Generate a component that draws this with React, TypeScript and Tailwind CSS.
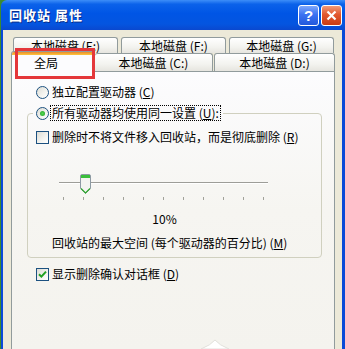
import React from "react";

const font = { fontFamily: '"Noto Sans CJK SC", "Noto Sans", sans-serif' };

const Radio = ({ checked }: { checked?: boolean }) => (
  <span className="relative flex h-[13px] w-[13px] shrink-0 items-center justify-center rounded-full border border-[#1c5180] bg-[linear-gradient(135deg,#dcdcd5_0%,#f4f4f0_60%,#ffffff_100%)]">
    {checked && (
      <span className="h-[5px] w-[5px] rounded-full bg-[radial-gradient(circle,#55d655_0%,#21a121_100%)]" />
    )}
  </span>
);

const Check = ({ checked }: { checked?: boolean }) => (
  <span className="flex h-[13px] w-[13px] shrink-0 items-center justify-center border border-[#1c5180] bg-[linear-gradient(135deg,#dcdcd5_0%,#f4f4f0_60%,#ffffff_100%)]">
    {checked && (
      <svg width="9" height="9" viewBox="0 0 9 9">
        <path d="M1 4.2 L3.4 6.6 L8 1.6" fill="none" stroke="#21a121" strokeWidth="2" />
      </svg>
    )}
  </span>
);

const Ul = ({ c }: { c: string }) => <span className="underline underline-offset-1">{c}</span>;

const Tab = ({ label, w }: { label: React.ReactNode; w: string }) => (
  <div
    className={`${w} flex h-[16px] items-center justify-center rounded-t-[3px] border border-b-0 border-[#919b9c] bg-[linear-gradient(180deg,#ffffff_0%,#f3f3ef_60%,#e6e5df_100%)] text-[12px] leading-[14px] text-black`}
  >
    {label}
  </div>
);

function Slider() {
  const ticks = Array.from({ length: 11 }, (_, i) => 6 + i * 20);
  return (
    <svg width="214" height="30" viewBox="0 0 214 30">
      <line x1="2" y1="10.5" x2="211" y2="10.5" stroke="#9d9d98" />
      <line x1="2" y1="11.5" x2="211" y2="11.5" stroke="#ffffff" />
      {ticks.map((x) => (
        <line key={x} x1={x + 0.5} y1="25" x2={x + 0.5} y2="28" stroke="#a1a19a" />
      ))}
      <path
        d="M23.5 4 Q23.5 2.5 25 2.5 H32 Q33.5 2.5 33.5 4 V16.5 L28.5 21.5 L23.5 16.5 Z"
        fill="#f4f4f0"
        stroke="#8d9aa3"
      />
      <rect x="24" y="3" width="9" height="3" fill="#3cbf3c" />
      <path d="M24 16.5 L28.5 21 L33 16.5" fill="none" stroke="#2ea52e" strokeWidth="1.2" />
    </svg>
  );
}

export default function App() {
  return (
    <div className="relative h-[349px] w-[345px] overflow-hidden bg-[#3c8a30]" style={font}>
      <div className="ml-[1px] flex h-full flex-col">
        <div className="flex h-[30px] items-center rounded-tl-[6px] bg-[linear-gradient(180deg,#3d8ef8_0%,#0b62ea_14%,#0055e5_45%,#0455e0_80%,#0a48cf_100%)] pl-[8px] pr-[3px]">
          <span className="flex-1 text-[13px] font-bold leading-[16px] tracking-[1px] text-white [text-shadow:1px_1px_0_#0a2f8a]">
            回收站 属性
          </span>
          <div className="flex gap-[2px]">
            <div className="flex h-[21px] w-[21px] items-center justify-center rounded-[3px] border border-white bg-[linear-gradient(180deg,#7ea8fb_0%,#3b72f2_45%,#2259dc_100%)] text-[15px] font-bold leading-none text-white" style={{ fontFamily: '"Liberation Sans", sans-serif' }}>
              ?
            </div>
            <div className="flex h-[21px] w-[21px] items-center justify-center rounded-[3px] border border-white bg-[linear-gradient(180deg,#f09a78_0%,#e2582f_45%,#c93b12_100%)]">
              <svg width="11" height="11" viewBox="0 0 11 11">
                <path d="M1.5 1.5 L9.5 9.5 M9.5 1.5 L1.5 9.5" stroke="#ffffff" strokeWidth="2.2" />
              </svg>
            </div>
          </div>
        </div>

        <div className="flex flex-1 flex-col overflow-hidden border-l-[2px] border-r-[3px] border-[#0a4ad8] bg-[#ece9d8] pl-[8px] pr-[7px] pt-[7px]">
          <div className="ml-[2px] flex gap-[3px]">
            <Tab w="w-[105px]" label={<span>本地磁盘 (E:)</span>} />
            <Tab w="w-[105px]" label={<span>本地磁盘 (F:)</span>} />
            <Tab w="w-[105px]" label={<span>本地磁盘 (G:)</span>} />
          </div>
          <div className="relative z-10 flex h-[18px] items-end">
            <div className="-mb-[1px] flex h-[21px] w-[84px] flex-col rounded-t-[3px] border border-b-0 border-[#919b9c] bg-[#fcfcfe]">
              <div className="h-[3px] rounded-t-[2px] bg-[linear-gradient(180deg,#e68b2c_0%,#ffc73c_100%)]" />
              <div className="flex flex-1 items-center justify-center pb-[2px] pr-[14px] text-[12px] leading-[14px] text-black">
                全局
              </div>
            </div>
            <div className="flex h-[18px] w-[118px] items-center justify-center rounded-t-[3px] border border-b-0 border-l-0 border-[#919b9c] bg-[linear-gradient(180deg,#ffffff_0%,#f3f3ef_60%,#e6e5df_100%)] text-[12px] leading-[14px]">
              本地磁盘 (C:)
            </div>
            <div className="ml-[1px] flex h-[18px] w-[121px] items-center justify-center rounded-t-[3px] border border-b-0 border-[#919b9c] bg-[linear-gradient(180deg,#ffffff_0%,#f3f3ef_60%,#e6e5df_100%)] text-[12px] leading-[14px]">
              本地磁盘 (D:)
            </div>
          </div>

          <div className="flex-1 border border-b-0 border-[#919b9c] bg-[linear-gradient(180deg,#fcfcfe_0%,#f6f5f1_50%,#f4f3ee_100%)] text-[12px] leading-[14px] text-black">
            <div className="ml-[24px] mt-[13px] flex h-[14px] items-center gap-[3px]">
              <Radio />
              <span>
                独立配置驱动器 (<Ul c="C" />)
              </span>
            </div>

            <fieldset className="ml-[15px] mt-[6px] w-[295px] rounded-[4px] border border-[#d0d0bf] pb-[7px] pl-[5px]">
              <legend className="flex h-[16px] items-center pl-[3px] pr-[2px]">
                <Radio checked />
                <span className="ml-[1px] border border-dotted border-black px-[1px] leading-[14px]">
                  所有驱动器均使用同一设置 (<Ul c="U" />):
                </span>
              </legend>
              <div className="ml-[3px] mt-[9px] flex h-[14px] items-center gap-[3px]">
                <Check />
                <span>
                  删除时不将文件移入回收站，而是彻底删除 (<Ul c="R" />)
                </span>
              </div>
              <div className="ml-[24px] mt-[28px] flex w-[214px] flex-col">
                <Slider />
                <div className="mt-[10px] h-[14px] pl-[1px] text-center">10%</div>
              </div>
              <div className="ml-[19px] mt-[10px] h-[14px]">
                回收站的最大空间 (每个驱动器的百分比) (<Ul c="M" />)
              </div>
            </fieldset>

            <div className="ml-[24px] mt-[9px] flex h-[14px] items-center gap-[3px]">
              <Check checked />
              <span>
                显示删除确认对话框 (<Ul c="D" />)
              </span>
            </div>
          </div>
        </div>
      </div>

      <div className="pointer-events-none absolute left-[15px] top-[48px] z-20 h-[31px] w-[80px] border-[3px] border-[#e4373a]" />
      <svg className="pointer-events-none absolute left-[201px] top-[339px]" width="28" height="10" viewBox="0 0 28 10">
        <path d="M0 10 Q10 6 14 1 Q18 6 28 10 Z" fill="#ffffff" stroke="#e2e1dc" />
      </svg>
    </div>
  );
}
